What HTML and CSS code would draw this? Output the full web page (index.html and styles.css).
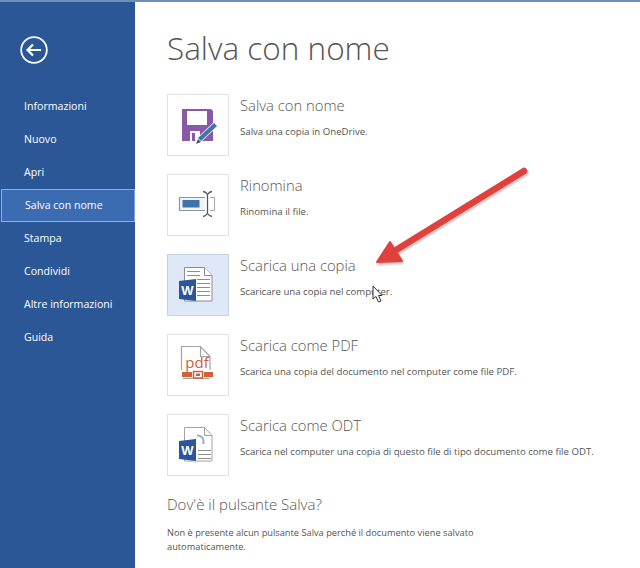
FILE: index.html
```html
<!DOCTYPE html>
<html lang="it">
<head>
<meta charset="utf-8">
<title>Salva con nome</title>
<link rel="stylesheet" href="styles.css">
</head>
<body>
<div class="app">
  <nav class="side">
    <svg class="back" width="30" height="30" viewBox="0 0 30 30" fill="none" stroke="#fff">
      <circle cx="15" cy="15" r="12.800" stroke-width="1.800"/>
      <path d="M8.500 15H22M14 9.500 8.500 15l5.500 5.500" stroke-width="2.200"/>
    </svg>
    <ul class="menu">
      <li>Informazioni</li>
      <li>Nuovo</li>
      <li>Apri</li>
      <li class="active">Salva con nome</li>
      <li>Stampa</li>
      <li>Condividi</li>
      <li>Altre informazioni</li>
      <li>Guida</li>
    </ul>
  </nav>
  <main class="main">
    <h1>Salva con nome</h1>
    <section class="row">
      <div class="tile">
        <svg width="62" height="62" viewBox="0 0 62 62">
          <path d="M15 15h29l2 2v30H15z" fill="#8a58a6"/>
          <rect x="20" y="17" width="20" height="14" fill="#fff"/>
          <rect x="23" y="37" width="10" height="10" fill="#fff"/>
          <rect x="25" y="39" width="3" height="8" fill="#8a58a6"/>
          <path d="M28 50l2-6 17-16 4 4-17 16z" fill="#fff"/>
          <path d="M31 44 47 29l3 3-16 15z" fill="#3f73ab"/>
          <path d="M29 50l2-5 3 3z" fill="#44546a"/>
        </svg>
      </div>
      <div class="info">
        <h2>Salva con nome</h2>
        <p>Salva una copia in OneDrive.</p>
      </div>
    </section>
    <section class="row">
      <div class="tile">
        <svg width="62" height="62" viewBox="0 0 62 62" fill="none">
          <path d="M38 23.500H12.500v13H38" stroke="#8e9499" stroke-width="1.200" fill="#f3f4f5"/>
          <path d="M43 23.500h4.500v13H43" stroke="#a5a9ad" stroke-width="1"/>
          <rect x="15.500" y="26" width="17" height="7.500" fill="#3f73ab"/>
          <path d="M36 17.500c2 0 3.500 1.500 4.500 3 1-1.500 2.500-3 4.500-3M40.500 20.500v19M36 42.500c2 0 3.500-1.500 4.500-3 1 1.500 2.500 3 4.500 3" stroke="#555" stroke-width="1.300"/>
        </svg>
      </div>
      <div class="info">
        <h2>Rinomina</h2>
        <p>Rinomina il file.</p>
      </div>
    </section>
    <section class="row">
      <div class="tile selected">
        <svg width="62" height="62" viewBox="0 0 62 62">
          <path d="M17.500 13.500h20l7.500 8v25.500H17.500z" fill="#fff" stroke="#8d8d8d"/>
          <path d="M37.500 13.500v8h7.500" fill="#fff" stroke="#8d8d8d"/>
          <path d="M20 17.500h13M20 21.500h13M30 25.500h13M30 29.500h13M30 33.500h13M30 37.500h13M30 41.500h13" stroke="#8d8d8d" stroke-width="1"/>
          <path d="M12 27 29 25v22L12 45z" fill="#2b579a"/>
          <text class="w" x="20.500" y="41">W</text>
        </svg>
      </div>
      <div class="info">
        <h2>Scarica una copia</h2>
        <p>Scaricare una copia nel computer.</p>
      </div>
    </section>
    <section class="row">
      <div class="tile">
        <svg width="62" height="62" viewBox="0 0 62 62" fill="none">
          <path d="M14.500 36V12.500h19l9.500 10V36M15.500 44.500h27" stroke="#a3a3a3" stroke-width="1.200"/>
          <path d="M33.500 12.500v10H43" stroke="#a3a3a3" stroke-width="1.200"/>
          <text class="pdf" x="30" y="34">pdf</text>
          <path d="M15 38h10v5H15zM37 38h9v5h-9z" fill="#d0603a"/>
          <rect x="26.500" y="37.500" width="9" height="6.500" fill="none" stroke="#d0603a" stroke-width="1.500"/>
          <rect x="29" y="39.500" width="4" height="2.500" fill="#d0603a"/>
        </svg>
      </div>
      <div class="info">
        <h2>Scarica come PDF</h2>
        <p>Scarica una copia del documento nel computer come file PDF.</p>
      </div>
    </section>
    <section class="row">
      <div class="tile">
        <svg width="62" height="62" viewBox="0 0 62 62" fill="none">
          <path d="M17.500 13.500h20l7.500 8v25.500H17.500z" fill="#fff" stroke="#a3a3a3"/>
          <path d="M37.500 13.500v8h7.500" stroke="#a3a3a3"/>
          <path d="M31 36.500h13M31 40.500h13M31 44.500h13" stroke="#8d8d8d" stroke-width="1.200"/>
          <path d="M30 21.500a6 6 0 0 1 6 8.500" stroke="#8fb2dc" stroke-width="2"/>
          <path d="M12 27 29 25v22L12 45z" fill="#2b579a"/>
          <text class="w" x="20.500" y="41">W</text>
        </svg>
      </div>
      <div class="info">
        <h2>Scarica come ODT</h2>
        <p>Scarica nel computer una copia di questo file di tipo documento come file ODT.</p>
      </div>
    </section>
    <h2 class="where">Dov'è il pulsante Salva?</h2>
    <p class="note">Non è presente alcun pulsante Salva perché il documento viene salvato automaticamente.</p>
  </main>
</div>
<svg class="arrow" width="190" height="120" viewBox="0 0 190 120">
  <path d="M178 7 50 86" stroke="#e0413d" stroke-width="6.500" stroke-linecap="round" fill="none"/>
  <path d="M31 98 44 78 56 97z" fill="#e0413d" stroke="#e0413d" stroke-width="2" stroke-linejoin="round"/>
</svg>
<svg class="cursor" width="16" height="20" viewBox="0 0 16 20">
  <path d="M1 1v13l3-2.500 2.500 5.500 2.500-1-2.500-5.500H10z" fill="#fff" stroke="#333" stroke-width="1"/>
</svg>
</body>
</html>
```
FILE: styles.css
```css
* { box-sizing: border-box; }
html, body { margin: 0; height: 100%; background: #fff; overflow: hidden; }
body { position: relative; font-family: "Open Sans", "Liberation Sans", sans-serif; color: #444; }
.app { display: flex; height: 568px; border-top: 2px solid #6f8fb5; }
.side { width: 135px; flex: none; background: #2b5797; color: #fff; padding-top: 33px; }
.back { display: block; margin-left: 19px; }
.menu { list-style: none; margin: 25px 0 0; padding: 0; }
.menu li { height: 33px; line-height: 33px; padding-left: 24px; font-size: 10.600px; white-space: nowrap; }
.menu li.active { background: #3b6cb2; border: 1px solid #8fb0da; border-right-color: #7d9fcc; padding-left: 23px; line-height: 31px; margin-left: 1px; }
.main { flex: 1; padding: 0 0 0 32px; min-width: 0; }
h1 { margin: 26px 0 0; height: 66px; font-size: 31.500px; line-height: 40px; font-weight: 300; color: #555; white-space: nowrap; }
.row { display: flex; gap: 11px; height: 62px; margin-bottom: 18px; }
.tile { width: 62px; height: 62px; flex: none; border: 1px solid #e2e2e2; background: #fff; }
.tile svg { display: block; margin: -1px; }
.tile.selected { background: #dfe8f6; border-color: #c4d4e8; }
.info { min-width: 0; }
h2 { margin: 0; font-size: 14.800px; line-height: 20px; font-weight: 300; color: #555; white-space: nowrap; }
.info h2 { margin-top: 1px; }
.info p { margin: 10px 0 0; font-size: 9.650px; line-height: 14px; color: #555; white-space: nowrap; }
.where { margin-top: 0; font-size: 15px; }
.note { margin: 12px 0 0; width: 350px; font-size: 9.250px; line-height: 14px; color: #555; }
.w { font: 700 13px "Liberation Sans", sans-serif; fill: #fff; text-anchor: middle; }
.pdf { font: 400 15px "Open Sans", sans-serif; fill: #c9603c; text-anchor: middle; }
.arrow { position: absolute; left: 346px; top: 164px; filter: drop-shadow(1px 2px 1px rgba(0,0,0,.25)); }
.cursor { position: absolute; left: 372px; top: 285px; }
```
